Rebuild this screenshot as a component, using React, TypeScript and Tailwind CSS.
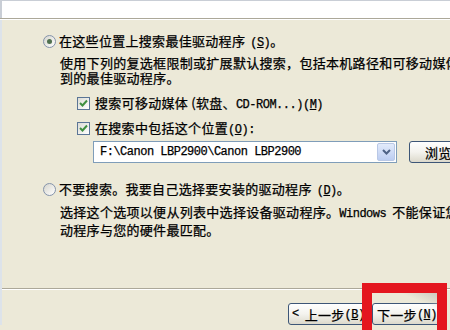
import type { ReactNode } from "react";

const cjk = "[font-family:'Noto_Sans_CJK_SC',sans-serif]";

// half-width latin text in the dialog looks like SimSun's monospace ascii
function A({ children }: { children: ReactNode }) {
  return (
    <span className="[font-family:'Liberation_Mono',monospace] text-[12px] tracking-[-0.5px]">
      {children}
    </span>
  );
}

function Key({ k, spaced }: { k: string; spaced?: boolean }) {
  return (
    <span className={spaced ? "ml-[5px]" : ""}>
      <A>
        (<span className="underline underline-offset-1">{k}</span>)
      </A>
    </span>
  );
}

function Radio({ checked }: { checked?: boolean }) {
  return (
    <span className="flex h-[13px] w-[13px] shrink-0 items-center justify-center rounded-full border border-[#8493ab] bg-gradient-to-br from-[#d6d5cd] to-white">
      {checked && <span className="h-[5px] w-[5px] rounded-full bg-[#4f704f]" />}
    </span>
  );
}

function Checkbox() {
  return (
    <span className="flex h-[13px] w-[13px] shrink-0 items-center justify-center border border-[#5b7596] bg-gradient-to-br from-[#dcdcd5] to-white">
      <svg width="11" height="11" viewBox="0 0 11 11">
        <polyline points="2,5 4.5,7.5 9,2.5" fill="none" stroke="#3f8f3f" strokeWidth="2" />
      </svg>
    </span>
  );
}

function XpButton({ children, className }: { children: ReactNode; className?: string }) {
  return (
    <div
      className={`flex h-[22px] items-center rounded-[3px] border border-[#3d5677] bg-gradient-to-b from-white via-[#f4f3ee] to-[#dcd9cc] text-[13px] text-black ${className ?? ""}`}
    >
      {children}
    </div>
  );
}

export default function App() {
  return (
    <div
      className={`relative h-[330px] w-[450px] overflow-hidden bg-[#ece9d8] text-[13px] leading-[15px] tracking-[0.3px] text-black [-webkit-text-stroke:0.25px_#000] ${cjk}`}
    >
      <div className="h-[18px] border-t border-l-2 border-[#c9ced6] bg-white" />
      <div className="h-px bg-[#aca899]" />
      <div className="h-px bg-white" />

      <div className="flex flex-col border-l-2 border-[#dde3ea]">
        <div className="mt-[14px] flex h-[15px] items-center gap-[3px] pl-[41px]">
          <Radio checked />
          <span className="whitespace-nowrap">
            在这些位置上搜索最佳驱动程序<Key k="S" spaced />。
          </span>
        </div>

        <div className="mt-[6px] pl-[58px] whitespace-nowrap">
          <div>使用下列的复选框限制或扩展默认搜索，包括本机路径和可移动媒体。会安装找</div>
          <div>到的最佳驱动程序。</div>
        </div>

        <div className="mt-[11px] flex h-[15px] items-center gap-[5px] pl-[75px]">
          <Checkbox />
          <span className="whitespace-nowrap">
            搜索可移动媒体 (软盘、<A>CD-ROM...)</A>
            <Key k="M" />
          </span>
        </div>

        <div className="mt-[10px] flex h-[15px] items-center gap-[5px] pl-[75px]">
          <Checkbox />
          <span className="whitespace-nowrap">
            在搜索中包括这个位置<Key k="O" />
            <A>:</A>
          </span>
        </div>

        <div className="mt-[5px] flex h-[22px] items-stretch gap-[12px] pl-[91px]">
          <div className="flex w-[304px] shrink-0 items-center border border-[#7f9db9] bg-white p-px">
            <span className="flex-1 pl-[5px] [font-family:'Liberation_Mono',monospace] text-[12px] tracking-[-0.5px]">
              F:\Canon LBP2900\Canon LBP2900
            </span>
            <span className="flex h-full w-[18px] items-center justify-center rounded-[2px] border border-[#b9c8e6] bg-gradient-to-b from-[#e3ebfb] to-[#bccdf1]">
              <svg width="9" height="6" viewBox="0 0 9 6">
                <polyline points="1,1 4.5,4.5 8,1" fill="none" stroke="#4d6185" strokeWidth="2" />
              </svg>
            </span>
          </div>
          <XpButton className="w-[75px] shrink-0 pl-[15px] whitespace-nowrap">
            浏览<Key k="R" />
            <A>...</A>
          </XpButton>
        </div>

        <div className="mt-[19px] flex h-[15px] items-center gap-[3px] pl-[41px]">
          <Radio />
          <span className="whitespace-nowrap">
            不要搜索。我要自己选择要安装的驱动程序<Key k="D" spaced />。
          </span>
        </div>

        <div className="mt-[7px] pl-[58px] whitespace-nowrap">
          <div>
            选择这个选项以便从列表中选择设备驱动程序。<A>Windows</A>
            <span className="ml-[6px]">不能保证您所选择的驱</span>
          </div>
          <div>动程序与您的硬件最匹配。</div>
        </div>

        <div className="mt-[51px] h-px bg-[#aca899]" />
        <div className="h-px bg-white" />

        <div className="mt-[13px] flex gap-[2px] pl-[286px]">
          <XpButton className="w-[82px] shrink-0 pl-[3px] whitespace-nowrap">
            <A>&lt;</A>
            <span className="ml-[6px]">上一步</span>
            <Key k="B" />
          </XpButton>
          <XpButton className="w-[75px] shrink-0 border-[#2f4c74] pl-[4px] whitespace-nowrap">
            下一步<Key k="N" />
          </XpButton>
        </div>
      </div>

      <div className="absolute left-[400px] top-[293px] h-[16px] w-[37px] bg-gradient-to-bl from-[#cdcac0] via-transparent to-transparent" />
      <div className="absolute left-[362px] top-[283px] h-[60px] w-[85px] border-[10px] border-[#e4161f]" />
    </div>
  );
}
